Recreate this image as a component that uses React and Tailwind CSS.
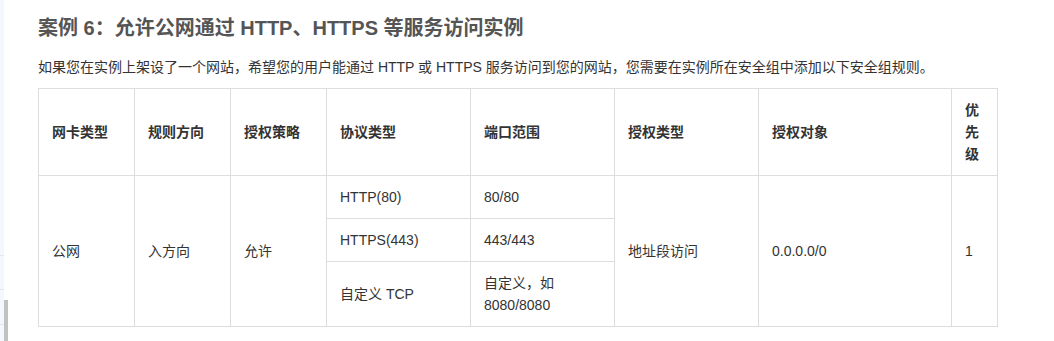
import React from "react";

const font = { fontFamily: '"Liberation Sans", "Noto Sans CJK SC", sans-serif' };

export default function App() {
  const th = "border border-[#dddddd] px-[13px] py-[10px] text-left align-middle font-bold text-[14px] leading-[22px] text-[#333333]";
  const td = "border border-[#dddddd] px-[13px] py-[10px] text-left align-middle font-normal text-[14px] leading-[22px] text-[#333333]";
  return (
    <div className="flex w-[1054px] h-[341px] overflow-hidden bg-white" style={font}>
      <div className="flex flex-col w-[4px] h-full bg-[#f4f8fd]">
        <div className="h-[255px]" />
        <div className="h-[34px] border-t border-[#e3e8ef]" />
        <div className="h-[35px] border-t border-[#e3e8ef]" />
        <div className="flex-1 border-t border-[#e3e8ef]" />
      </div>
      <div className="flex flex-col justify-end w-[4px] h-full">
        <div className="h-[41px] bg-[#c1c1c1]" />
      </div>
      <div className="flex flex-col pl-[30px] pt-[14px]">
        <h1 className="text-[20px] leading-[28px] font-bold text-[#555555]">
          案例 6：允许公网通过 HTTP、HTTPS 等服务访问实例
        </h1>
        <p className="mt-[14px] text-[14px] leading-[22px] text-[#333333]">
          如果您在实例上架设了一个网站，希望您的用户能通过 HTTP 或 HTTPS 服务访问到您的网站，您需要在实例所在安全组中添加以下安全组规则。
        </p>
        <table className="mt-[10px] table-fixed border-collapse w-[959px]">
          <colgroup>
            <col className="w-[96px]" />
            <col className="w-[96px]" />
            <col className="w-[96px]" />
            <col className="w-[144px]" />
            <col className="w-[144px]" />
            <col className="w-[144px]" />
            <col className="w-[193px]" />
            <col className="w-[46px]" />
          </colgroup>
          <thead>
            <tr>
              <th className={th}>网卡类型</th>
              <th className={th}>规则方向</th>
              <th className={th}>授权策略</th>
              <th className={th}>协议类型</th>
              <th className={th}>端口范围</th>
              <th className={th}>授权类型</th>
              <th className={th}>授权对象</th>
              <th className={th}>优先级</th>
            </tr>
          </thead>
          <tbody>
            <tr>
              <td rowSpan={3} className={td}>公网</td>
              <td rowSpan={3} className={td}>入方向</td>
              <td rowSpan={3} className={td}>允许</td>
              <td className={td}>HTTP(80)</td>
              <td className={td}>80/80</td>
              <td rowSpan={3} className={td}>地址段访问</td>
              <td rowSpan={3} className={td}>0.0.0.0/0</td>
              <td rowSpan={3} className={td}>1</td>
            </tr>
            <tr>
              <td className={td}>HTTPS(443)</td>
              <td className={td}>443/443</td>
            </tr>
            <tr>
              <td className={td}>自定义 TCP</td>
              <td className={td}>自定义，如 8080/8080</td>
            </tr>
          </tbody>
        </table>
      </div>
    </div>
  );
}
